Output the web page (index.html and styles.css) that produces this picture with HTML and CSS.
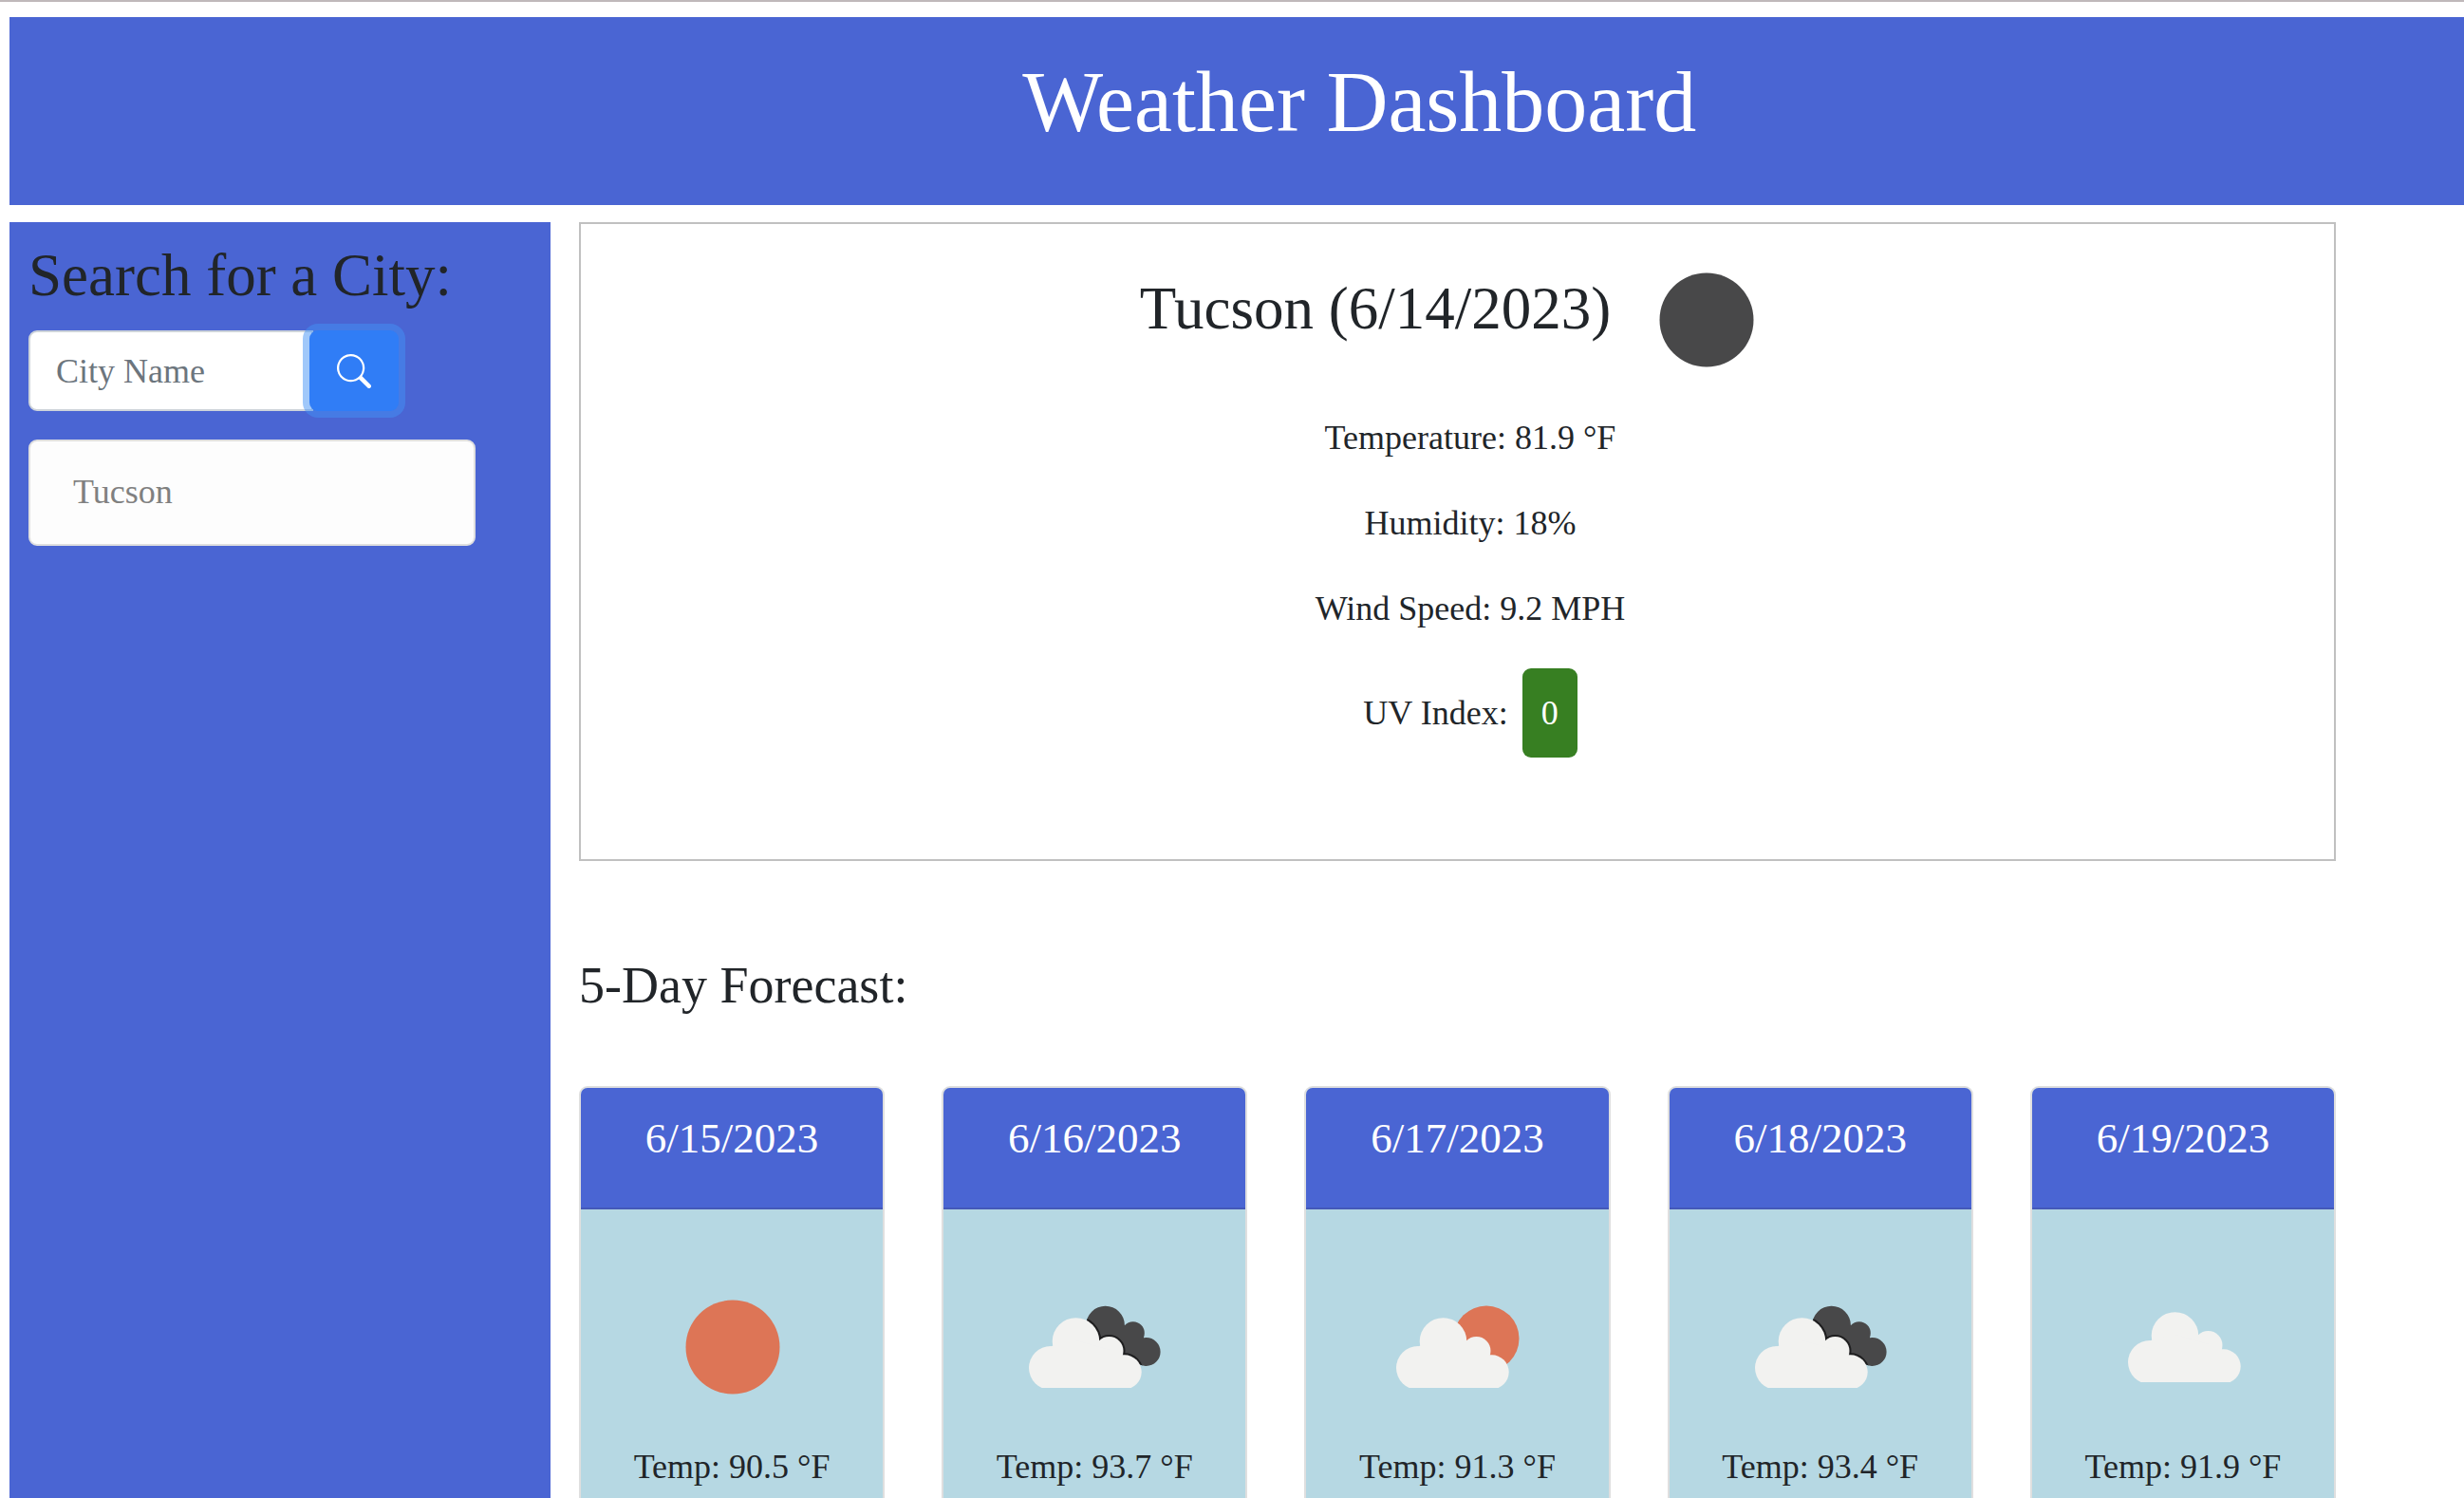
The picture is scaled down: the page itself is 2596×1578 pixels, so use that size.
FILE: index.html
```html
<!DOCTYPE html>
<html lang="en">
<head>
  <meta charset="utf-8">
  <meta name="viewport" content="width=device-width, initial-scale=1">
  <title>Weather Dashboard</title>
  <link rel="stylesheet" href="styles.css">
</head>
<body>
  <svg class="sprite" width="0" height="0" aria-hidden="true">
    <clipPath id="cloud-base"><rect x="0" y="0" width="200" height="138"/></clipPath>
    <clipPath id="back-shape">
      <circle cx="111.600" cy="78" r="20.300"/>
      <circle cx="140.800" cy="86.300" r="12"/>
      <circle cx="154.600" cy="106" r="15"/>
      <path d="M98 88L131 82L152 91L154 121L125 112Z"/>
    </clipPath>
    <symbol id="disc" viewBox="0 0 200 200">
      <circle cx="101" cy="101" r="49.500"/>
    </symbol>
    <symbol id="cloud" viewBox="0 0 200 200">
      <g clip-path="url(#cloud-base)">
        <circle cx="65" cy="117" r="23"/>
        <circle cx="91.500" cy="89" r="24.800"/>
        <circle cx="126.500" cy="99" r="15"/>
        <circle cx="142.700" cy="121.300" r="18"/>
        <path d="M58 139L66 94L92 88L127 98L142 104L150 139Z"/>
      </g>
    </symbol>
    <symbol id="broken-clouds" viewBox="0 0 200 200">
      <g clip-path="url(#back-shape)">
        <rect class="night" width="200" height="200"/>
        <use class="cloud-edge" href="#cloud" x="-11" y="6" width="200" height="200"/>
      </g>
      <use class="cloud" href="#cloud" x="-11" y="6" width="200" height="200"/>
    </symbol>
  </svg>

  <header class="banner">
    <h1 class="banner-title">Weather Dashboard</h1>
  </header>

  <div class="dashboard">
    <aside class="sidebar">
      <h2 class="sidebar-title"><label for="city">Search for a City:</label></h2>
      <form class="search">
        <input class="search-input" id="city" type="text" placeholder="City Name">
        <button class="search-button" type="button" aria-label="Search">
          <svg class="search-icon" viewBox="0 0 16 16" fill="currentColor" aria-hidden="true">
            <path d="M11.742 10.344a6.500 6.500 0 1 0-1.397 1.398h-.001c.03.04.062.078.098.115l3.850 3.850a1 1 0 0 0 1.415-1.414l-3.850-3.850a1.007 1.007 0 0 0-.115-.1zM12 6.500a5.500 5.500 0 1 1-11 0 5.500 5.500 0 0 1 11 0z"/>
          </svg>
        </button>
      </form>
      <button class="history-item" type="button">Tucson</button>
    </aside>

    <main class="content">
      <section class="current">
        <div class="current-heading">
          <h2 class="current-title">Tucson (6/14/2023)</h2>
          <svg class="weather-icon night"><use href="#disc"/></svg>
        </div>
        <p class="reading">Temperature: 81.9 °F</p>
        <p class="reading">Humidity: 18%</p>
        <p class="reading">Wind Speed: 9.2 MPH</p>
        <p class="reading">UV Index: <span class="uv-badge">0</span></p>
      </section>

      <h3 class="forecast-title">5-Day Forecast:</h3>
      <section class="forecast">
        <article class="card">
          <div class="card-header"><h4 class="card-date">6/15/2023</h4></div>
          <div class="card-body">
            <svg class="weather-icon"><use class="sun" href="#disc"/></svg>
            <p class="card-text">Temp: 90.5 °F</p>
          </div>
        </article>
        <article class="card">
          <div class="card-header"><h4 class="card-date">6/16/2023</h4></div>
          <div class="card-body">
            <svg class="weather-icon"><use href="#broken-clouds"/></svg>
            <p class="card-text">Temp: 93.7 °F</p>
          </div>
        </article>
        <article class="card">
          <div class="card-header"><h4 class="card-date">6/17/2023</h4></div>
          <div class="card-body">
            <svg class="weather-icon" viewBox="0 0 200 200"><circle class="sun" cx="131" cy="92" r="34.500"/><use class="cloud" href="#cloud" x="-6" y="6"/></svg>
            <p class="card-text">Temp: 91.3 °F</p>
          </div>
        </article>
        <article class="card">
          <div class="card-header"><h4 class="card-date">6/18/2023</h4></div>
          <div class="card-body">
            <svg class="weather-icon"><use href="#broken-clouds"/></svg>
            <p class="card-text">Temp: 93.4 °F</p>
          </div>
        </article>
        <article class="card">
          <div class="card-header"><h4 class="card-date">6/19/2023</h4></div>
          <div class="card-body">
            <svg class="weather-icon" viewBox="0 0 200 200"><use class="cloud" href="#cloud"/></svg>
            <p class="card-text">Temp: 91.9 °F</p>
          </div>
        </article>
      </section>
    </main>
  </div>
</body>
</html>
```
FILE: styles.css
```css
:root {
  --royal: #4a65d3;
  --ink: #212529;
}

* {
  box-sizing: border-box;
}

body {
  display: flex;
  flex-direction: column;
  gap: 18px;
  height: 100vh;
  margin: 0;
  padding-left: 10px;
  overflow: hidden;
  border-top: 2px solid #bfb8ba;
  background: #fff;
  color: var(--ink);
  font-family: "Liberation Serif", "Times New Roman", serif;
  font-size: 36px;
  line-height: 54px;
}

h1, h2, h3, h4, p {
  margin: 0;
  font-weight: 400;
}

.sprite {
  position: absolute;
}

.banner {
  margin-top: 16px;
  padding: 36px 0 54px 10%;
  background: var(--royal);
  color: #fff;
  text-align: center;
}

.banner-title {
  font-size: 90px;
  line-height: 108px;
}

.dashboard {
  display: grid;
  flex: 1;
  grid-template-columns: 570px 1fr;
  gap: 30px;
  padding-right: 135px;
}

.sidebar {
  padding: 18px 20px;
  background: var(--royal);
}

.sidebar-title {
  margin-bottom: 20px;
  font-size: 63px;
  line-height: 76px;
}

.search {
  display: flex;
  width: 390px;
  margin-bottom: 30px;
}

.search-input {
  flex: 1;
  min-width: 0;
  height: 85px;
  padding: 0 27px;
  border: 2px solid #ced4da;
  border-radius: 9px 0 0 9px;
  background: #fff;
  color: var(--ink);
  font: inherit;
}

.search-input::placeholder {
  color: #6c757d;
  opacity: 1;
}

.search-button {
  display: flex;
  align-items: center;
  justify-content: center;
  width: 94px;
  margin-left: -4px;
  z-index: 1;
  border: 0;
  border-radius: 9px;
  background: #307df6;
  box-shadow: 0 0 0 7px rgba(65, 145, 245, 0.5);
  color: #fff;
}

.search-icon {
  width: 36px;
  height: 36px;
}

.history-item {
  display: block;
  width: 471px;
  padding: 26px 45px 28px;
  border: 2px solid #dfdfdf;
  border-radius: 9px;
  background: #fdfdfd;
  color: #808080;
  font: inherit;
  text-align: left;
}

.current {
  margin-bottom: 99px;
  padding: 0 0 107px 27px;
  border: 2px solid #c0c0c0;
  text-align: center;
}

.current-heading {
  display: flex;
  justify-content: center;
  height: 198px;
}

.current-title {
  padding-top: 51px;
  font-size: 63px;
  line-height: 76px;
}

.weather-icon {
  display: block;
  width: 200px;
  height: 200px;
}

.night {
  fill: #484849;
}

.sun {
  fill: #dd7556;
}

.cloud {
  fill: #f2f2f0;
}

.cloud-edge {
  stroke: #1e1e1f;
  stroke-width: 4px;
}

.reading + .reading {
  margin-top: 36px;
}

.uv-badge {
  display: inline-block;
  margin-left: 6px;
  padding: 20px;
  border-radius: 9px;
  background: #377f22;
  color: #fff;
}

.forecast-title {
  margin-bottom: 73px;
  font-size: 54px;
  line-height: 65px;
}

.forecast {
  display: grid;
  grid-template-columns: repeat(5, 1fr);
  gap: 60px;
}

.card {
  border: 2px solid #dfdfdf;
  border-radius: 9px;
  background: #b6d8e3;
  overflow: hidden;
  text-align: center;
}

.card-header {
  padding: 26px 0 46px;
  border-bottom: 2px solid #4459b9;
  background: var(--royal);
  color: #fff;
}

.card-date {
  font-size: 45px;
  line-height: 54px;
}

.card-body {
  display: flex;
  flex-direction: column;
  align-items: center;
  padding: 44px 0;
}
```
